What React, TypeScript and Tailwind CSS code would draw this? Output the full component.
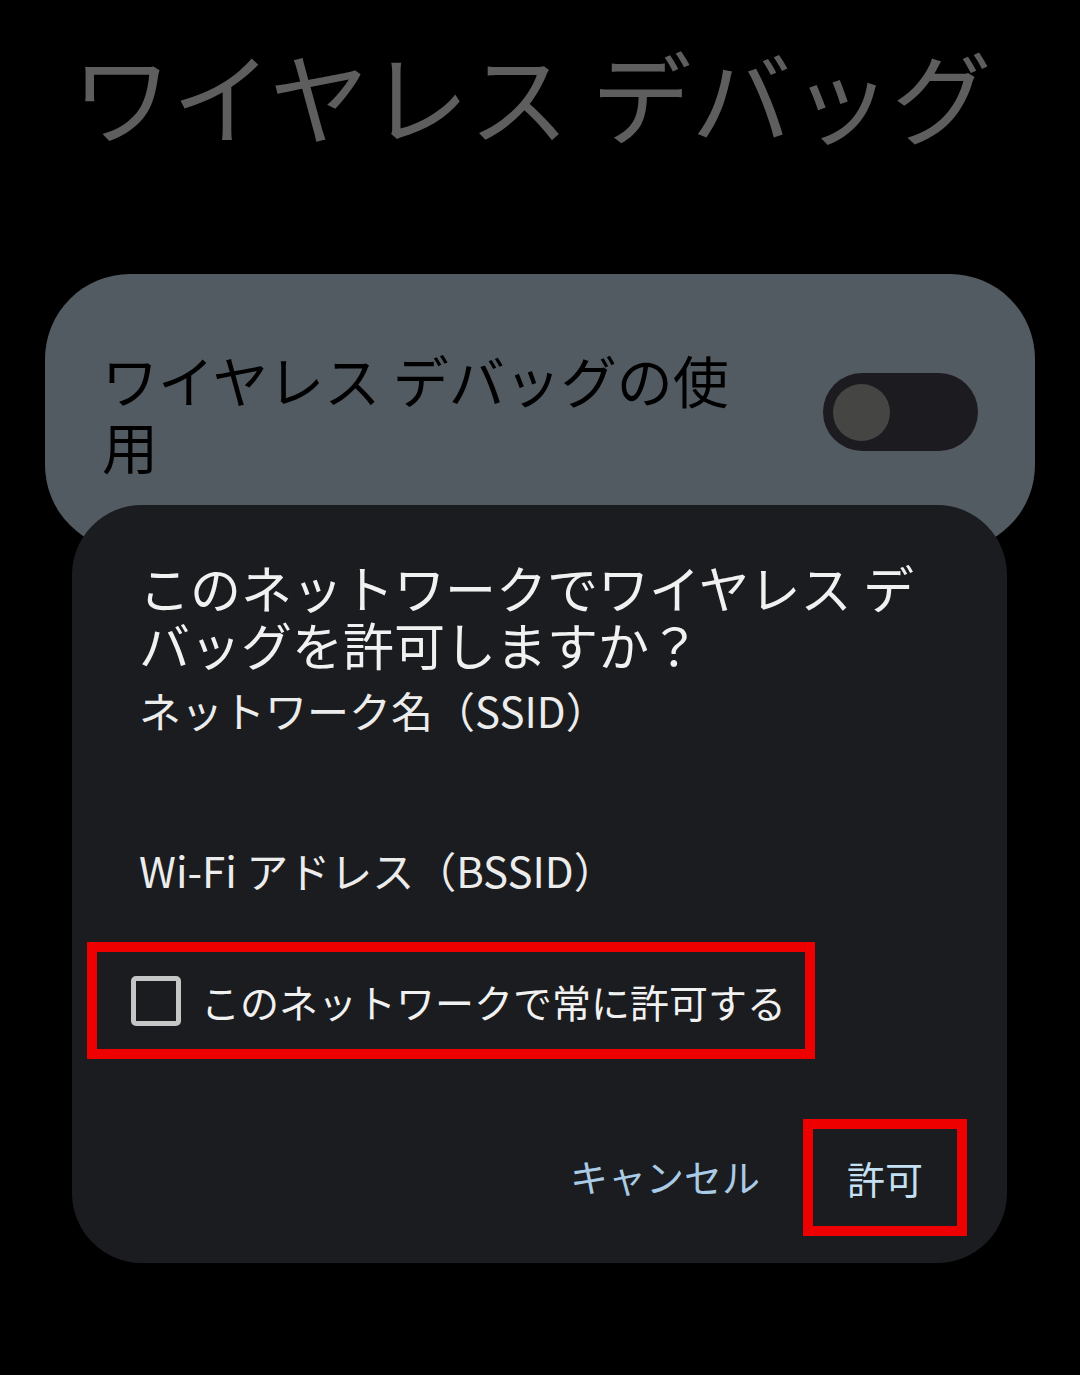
import React from 'react';

const font = { fontFamily: '"Noto Sans CJK JP", "Noto Sans", sans-serif' };

// Simple off-state switch
const Toggle = () => (
  <div className="w-[155px] h-[78px] rounded-full bg-[#1c1b1f] flex items-center pl-[10px]">
    <div className="w-[57px] h-[57px] rounded-full bg-[#454543]" />
  </div>
);

const App: React.FC = () => {
  return (
    <div className="relative w-[1080px] h-[1375px] bg-black overflow-hidden" style={font}>
      {/* Page title */}
      <h1 className="pl-[72px] pt-[44px] text-[100px] leading-[100px] text-[#5e5e5e] whitespace-nowrap">
        ワイヤレス デバッグ
      </h1>

      {/* Main switch card */}
      <div className="mx-[45px] mt-[130px] h-[276px] rounded-[85px] bg-[#535b62] flex items-start justify-between pl-[57px] pr-[57px] pt-[72px]">
        <p className="w-[650px] text-[56px] leading-[66px] text-black">ワイヤレス デバッグの使用</p>
        <div className="pt-[27px]">
          <Toggle />
        </div>
      </div>

      {/* Dialog */}
      <div className="absolute left-[72px] top-[505px] w-[935px] h-[758px] rounded-[70px] bg-[#1b1c1f] flex flex-col">
        <div className="pl-[67px] pr-[71px] pt-[54px]">
          <h2 className="text-[51px] leading-[57px] text-[#f1f1f1]">
            このネットワークでワイヤレス デバッグを許可しますか？
          </h2>
          <p className="mt-[12px] text-[42px] leading-[50px] text-[#ececec]">ネットワーク名（SSID）</p>
          <p className="mt-[110px] text-[42px] leading-[50px] text-[#ececec]">Wi-Fi アドレス（BSSID）</p>
        </div>

        <div className="ml-[15px] mt-[47px] w-[728px] h-[117px] border-[10px] border-[#ee0000] flex items-center pl-[34px] gap-[20px]">
          <div className="w-[50px] h-[50px] rounded-[5px] border-[5px] border-[#c4c7c5]" />
          <span className="text-[39px] leading-[50px] text-[#f1f1f1] whitespace-nowrap">このネットワークで常に許可する</span>
        </div>

        <div className="mt-[60px] flex items-center justify-end pr-[40px]">
          <span className="text-[38px] leading-[50px] text-[#a9cbe6] mr-[43px] -translate-y-[2px]">キャンセル</span>
          <div className="w-[164px] h-[117px] border-[10px] border-[#ee0000] flex items-center justify-center">
            <span className="text-[38px] leading-[50px] text-[#c4e0f2]">許可</span>
          </div>
        </div>
      </div>
    </div>
  );
};

export default App;
